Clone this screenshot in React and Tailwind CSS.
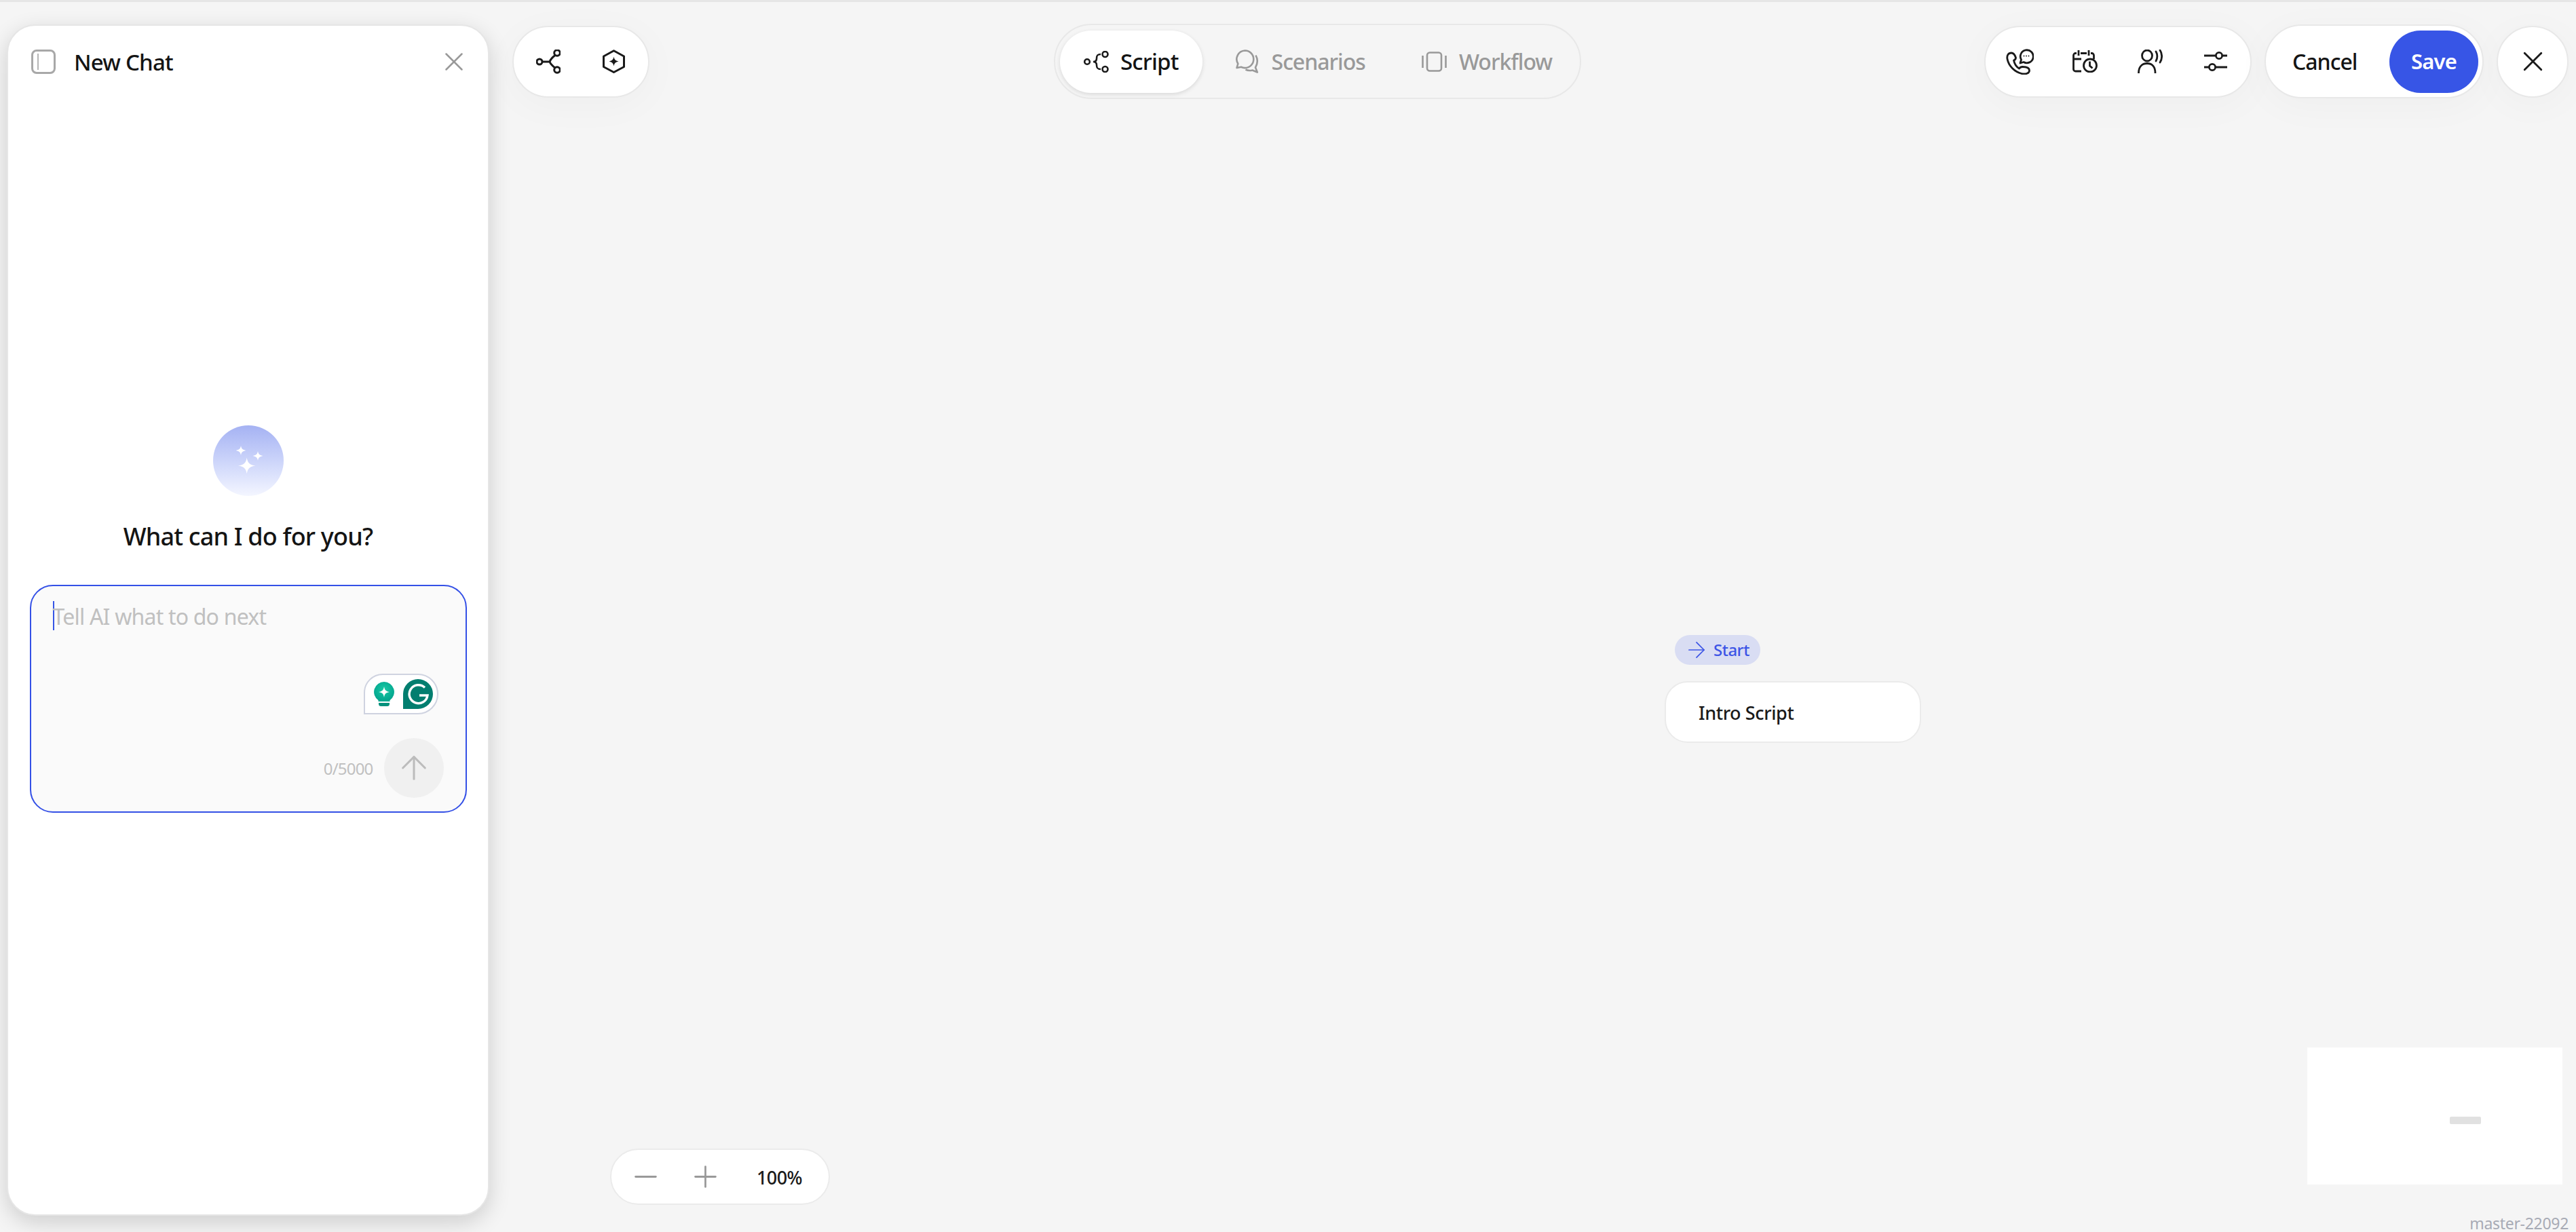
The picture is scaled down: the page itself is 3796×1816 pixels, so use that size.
import { Minus, Plus, X, ArrowUp, ArrowRight } from "lucide-react";

function ShareIcon() {
  return (
    <svg width="36" height="36" viewBox="0 0 36 36" fill="none" stroke="#1a1a1a" strokeWidth="3">
      <circle cx="5" cy="18" r="4" />
      <circle cx="31" cy="5" r="4.3" />
      <circle cx="31" cy="30" r="4.3" />
      <path d="M9 18h11M28 8.5c-4 3-6.5 5-8 9.5 1.5 4 4 6 8 9" />
    </svg>
  );
}

function HexIcon() {
  return (
    <svg width="33" height="35" viewBox="0 0 33 35" fill="none" stroke="#1a1a1a" strokeWidth="3">
      <path d="M16.5 1.7 31.5 10v15.5l-15 8-15-8V10z" strokeLinejoin="round" />
      <path d="M16.5 10.500c.8 4.300 2.400 6 7 7-4.600 1-6.200 2.700-7 7-.8-4.300-2.400-6-7-7 4.600-1 6.200-2.700 7-7z" fill="#1a1a1a" stroke="none" />
    </svg>
  );
}

function ScriptIcon() {
  return (
    <svg width="37" height="32" viewBox="0 0 37 32" fill="none" stroke="#1a1a1a" strokeWidth="2.6">
      <circle cx="5" cy="16" r="3.8" />
      <circle cx="31.500" cy="5" r="4" />
      <circle cx="31.500" cy="27" r="4" />
      <path d="M25 5c-5 0-6 2-6 6 0 3-1 5-5 5 4 0 5 2 5 5 0 4 1 6 6 6" />
    </svg>
  );
}

function ChatsIcon() {
  return (
    <svg width="36" height="35" viewBox="0 0 36 35" fill="none" stroke="#999" strokeWidth="2.6" strokeLinejoin="round">
      <path d="M14.500 1.500a12.800 12.800 0 0 1 0 25.600c-2 0-3.800-.5-5.500-1.300L2.500 27l1.800-6A12.800 12.800 0 0 1 14.500 1.500z" />
      <path d="M30.500 8.500c3 5.500 3 12-.5 18l2.800 7-7.300-3c-3.500 1-7 .6-10-1" />
    </svg>
  );
}

function WorkflowIcon() {
  return (
    <svg width="37" height="30" viewBox="0 0 37 30" fill="none" stroke="#999" strokeWidth="2.6">
      <rect x="8" y="1.500" width="21" height="27" rx="4" />
      <path d="M1.500 6v18M35.500 6v18" />
    </svg>
  );
}

function PhoneChatIcon() {
  return (
    <svg width="41" height="38" viewBox="0 0 41 38" fill="none" stroke="#1a1a1a" strokeWidth="2.800" strokeLinejoin="round" strokeLinecap="round">
      <path d="M8 6C3.500 6 1 9.500 2 15c2 10.500 11 19 21 21.500 6 1.500 11.500-.5 11.500-4.500 0-4-5-5.500-10-5.500-2 0-4 1-5 2.500-3.500-2-7-7-8-12 2-.8 3-2 3-4C13.500 10 11 6 8 6z" />
      <path d="M21 21l1.500-5a9.500 9.500 0 1 1 3.500 3.500z" />
      <circle cx="26.500" cy="10.500" r="0.900" fill="#1a1a1a" stroke="none" />
      <circle cx="30" cy="10.500" r="0.900" fill="#1a1a1a" stroke="none" />
      <circle cx="33.500" cy="10.500" r="0.900" fill="#1a1a1a" stroke="none" />
    </svg>
  );
}

function CalendarClockIcon() {
  return (
    <svg width="37" height="33" viewBox="0 0 37 33" fill="none" stroke="#1a1a1a" strokeWidth="2.800">
      <path d="M13 31H4.500A3 3 0 0 1 1.500 28V7.500a3 3 0 0 1 3-3H6M12 4.500h9M27 4.500h1.500a3 3 0 0 1 3 3V13" />
      <path d="M9 0v8M24 0v8M1.500 13H13" />
      <circle cx="26" cy="22.500" r="9.500" />
      <path d="M25.500 16.500v6.500l4 3.500" />
    </svg>
  );
}

function VoiceUserIcon() {
  return (
    <svg width="37" height="35" viewBox="0 0 37 35" fill="none" stroke="#1a1a1a" strokeWidth="2.800" strokeLinecap="round">
      <ellipse cx="14" cy="9" rx="7.500" ry="8" />
      <path d="M1.500 34.500C1.500 26 6 20.500 14 20.500S26 26 26 34.500" />
      <path d="M27 3c2.500 4 2.500 10 0 14M33 1c3.500 5 3.500 13 0 18" />
    </svg>
  );
}

function SlidersIcon() {
  return (
    <svg width="34" height="29" viewBox="0 0 34 29" fill="none" stroke="#1a1a1a" strokeWidth="2.800">
      <path d="M0 6h17M27 6h7M0 23h7M17 23h17" />
      <circle cx="22" cy="6" r="4.600" />
      <circle cx="12" cy="23" r="4.600" />
    </svg>
  );
}

function Sparkles() {
  return (
    <svg width="44" height="44" viewBox="0 0 44 44" fill="#fff">
      <path d="M15 10c1.500 8 4 10.500 13 12-9 1.500-11.500 4-13 12-1.500-8-4-10.500-13-12 9-1.500 11.500-4 13-12z" transform="translate(5 8) scale(0.98)" />
      <path d="M11 0c.8 4.500 2.300 6 7.500 7-5.200 1-6.700 2.500-7.500 7-.8-4.500-2.300-6-7.500-7 5.200-1 6.700-2.500 7.500-7z" />
      <path d="M36 8c.8 4.500 2.300 6 7.500 7-5.200 1-6.700 2.500-7.500 7-.8-4.500-2.300-6-7.500-7 5.200-1 6.700-2.500 7.500-7z" />
    </svg>
  );
}

function GrammarlyBadge() {
  return (
    <div className="absolute left-[490px] top-[129px] flex h-[60px] w-[110px] items-center gap-[13px] rounded-tl-[28px] rounded-r-[30px] border-2 border-[#cfd3e0] bg-white pl-[13px]">
      <svg width="30" height="36" viewBox="0 0 30 36">
        <defs>
          <radialGradient id="bulb" cx="50%" cy="40%" r="55%">
            <stop offset="0%" stopColor="#19c9a5" />
            <stop offset="100%" stopColor="#03a78f" />
          </radialGradient>
        </defs>
        <path d="M15 0a15 15 0 0 1 8.500 27.300V29H6.500v-1.700A15 15 0 0 1 15 0z" fill="url(#bulb)" />
        <path d="M7 31h16v1.500a3.500 3.500 0 0 1-3.500 3.500h-9A3.500 3.500 0 0 1 7 32.500z" fill="#03917c" />
        <path d="M15 7c1 5.500 2.500 7 8 8-5.500 1-7 2.500-8 8-1-5.500-2.500-7-8-8 5.500-1 7-2.500 8-8z" fill="#fff" />
      </svg>
      <svg width="44" height="44" viewBox="0 0 44 44" fill="none">
        <path d="M22 0a22 22 0 0 1 0 44H0V22A22 22 0 0 1 22 0z" fill="#027e6f" />
        <path d="M32 12.500A13.500 13.500 0 1 0 36 24H24" stroke="#fff" strokeWidth="3.400" />
      </svg>
    </div>
  );
}

function ChatPanel() {
  return (
    <aside className="mt-[1px] flex h-[1756px] w-[711px] shrink-0 flex-col rounded-[42px] border-2 border-[#e6e6e6] bg-white shadow-[0_10px_32px_rgba(0,0,0,0.16)]">
      <header className="flex h-[106px] items-center justify-between pl-[34px] pr-[27px]">
        <div className="flex items-center gap-[27px]">
          <div className="flex h-[36px] w-[36px] rounded-[8px] border-[3px] border-[#a8a8a8] pl-[6px]">
            <div className="h-[24px] w-[2px] self-center bg-[#b5b5b5]"></div>
          </div>
          <span className="text-[33px] font-medium leading-none tracking-[-0.8px] text-[#141414]">New Chat</span>
        </div>
        <X size={46} strokeWidth={1.3} className="text-[#999]" />
      </header>

      <div className="flex flex-col items-center pt-[483px]">
        <div className="flex h-[104px] w-[104px] items-center justify-center rounded-full bg-gradient-to-b from-[#a5b2f3] to-[#f4f6ff]">
          <Sparkles />
        </div>
        <h2 className="mt-[34px] h-[52px] text-[36px] font-medium leading-[52px] tracking-[-0.8px] text-[#141414]">What can I do for you?</h2>

        <div className="relative mt-[45px] flex h-[336px] w-[644px] flex-col justify-between rounded-[34px] border-2 border-[#3450e6] bg-[#fafafa] pb-[20px] pl-[32px] pr-[32px] pt-[21px]">
          <div className="flex items-center">
            <div className="h-[43px] w-[2px] bg-[#3755e6]"></div>
            <span className="-ml-[2px] pt-[2px] text-[32px] leading-[43px] tracking-[-0.8px] text-[#c0c0c0]">Tell AI what to do next</span>
          </div>
          <GrammarlyBadge />
          <div className="flex items-center justify-end gap-[16px]">
            <span className="pt-[2px] text-[24px] tracking-[-0.8px] text-[#c0c0c0]">0/5000</span>
            <button className="flex h-[88px] w-[88px] items-center justify-center rounded-full bg-[#f0f0f0] text-[#bcbcbc]">
              <ArrowUp size={56} strokeWidth={1.3} />
            </button>
          </div>
        </div>
      </div>
    </aside>
  );
}

function Tab({ icon, label, active }) {
  return (
    <div
      className={
        active
          ? "flex h-[92px] items-center gap-[17px] rounded-full bg-white px-[35px] text-[33px] tracking-[-0.8px] text-[#141414] shadow-[0_2px_6px_rgba(0,0,0,0.12)]"
          : "flex h-[92px] items-center gap-[18px] rounded-full px-[35px] text-[32px] tracking-[-1px] text-[#999]"
      }
    >
      {icon}
      <span className="font-medium">{label}</span>
    </div>
  );
}

function Toolbar() {
  return (
    <div className="flex h-[111px] items-center pl-[34px] pr-[11px]">
      <div className="flex h-[106px] w-[202px] items-center gap-[62px] rounded-full border-2 border-[#e8e8e8] bg-white pl-[33px] shadow-[0_10px_60px_rgba(0,0,0,0.03)]">
        <ShareIcon />
        <HexIcon />
      </div>

      <div className="ml-[596px] flex h-[111px] w-[777px] items-center gap-[13px] rounded-full border-2 border-[#e8e8e8] pl-[7px]">
        <Tab active icon={<ScriptIcon />} label="Script" />
        <Tab icon={<ChatsIcon />} label="Scenarios" />
        <Tab icon={<WorkflowIcon />} label="Workflow" />
      </div>

      <div className="ml-auto flex items-center gap-[19px]">
        <div className="flex h-[106px] w-[394px] items-center rounded-full border-2 border-[#e8e8e8] bg-white pl-[30px] shadow-[0_10px_60px_rgba(0,0,0,0.03)]">
          <div className="flex w-[98px]"><PhoneChatIcon /></div>
          <div className="flex w-[96px]"><CalendarClockIcon /></div>
          <div className="flex w-[98px]"><VoiceUserIcon /></div>
          <SlidersIcon />
        </div>

        <div className="flex h-[109px] w-[323px] items-center justify-between rounded-full border-2 border-[#e8e8e8] bg-white pl-[39px] pr-[6px] shadow-[0_10px_60px_rgba(0,0,0,0.03)]">
          <span className="text-[32px] font-medium tracking-[-1px] text-[#141414]">Cancel</span>
          <button className="flex h-[92px] w-[131px] items-center justify-center rounded-full bg-[#3755e6] text-[31px] font-semibold tracking-[-0.8px] text-white">Save</button>
        </div>

        <button className="flex h-[106px] w-[106px] items-center justify-center rounded-full border-2 border-[#e8e8e8] bg-white shadow-[0_10px_60px_rgba(0,0,0,0.03)]">
          <X size={49} strokeWidth={1.4} className="text-[#1a1a1a]" />
        </button>
      </div>
    </div>
  );
}

function Canvas() {
  return (
    <div className="relative flex-1">
      {/* node sits on the flow canvas */}
      <div className="absolute left-[1732px] top-[790px] flex w-[378px] flex-col items-start">
        <div className="ml-[15px] flex h-[44px] w-[126px] items-center gap-[6px] rounded-full bg-[#d9ddf3] pl-[13px] text-[#3d55e6]">
          <ArrowRight size={38} strokeWidth={1.1} />
          <span className="text-[24px] font-medium tracking-[-0.5px]">Start</span>
        </div>
        <div className="mt-[24px] flex h-[91px] w-[378px] items-center rounded-[34px] border-2 border-[#ebebeb] bg-white pl-[48px]">
          <span className="pt-[3px] text-[27px] font-medium tracking-[-0.4px] text-[#1a1a1a]">Intro Script</span>
        </div>
      </div>

      <div className="absolute left-[178px] top-[1547px] flex h-[83px] w-[324px] items-center rounded-full border-2 border-[#ebebeb] bg-white pl-[25px]">
        <Minus size={51} strokeWidth={1.3} className="text-[#999]" />
        <Plus size={51} strokeWidth={1.3} className="ml-[37px] text-[#999]" />
        <span className="ml-[50px] pt-[3px] text-[27px] font-medium tracking-[-0.6px] text-[#1a1a1a]">100%</span>
      </div>

      <div className="absolute left-[2679px] top-[1398px] flex h-[202px] w-[376px] bg-white pl-[210px] pt-[102px]">
        <div className="h-[11px] w-[46px] rounded-[2px] bg-[#e1e1e1]"></div>
      </div>

      <span className="absolute bottom-[1px] right-[11px] text-[23px] leading-none tracking-[-0.3px] text-[#a8abb5]">master-22092</span>
    </div>
  );
}

export default function App() {
  return (
    <div className="flex h-[1816px] w-full overflow-hidden border-t-[3px] border-[#e6e6e6] bg-[#f5f5f5] pl-[10px] pt-[32px] font-['Noto_Sans',sans-serif]">
      <ChatPanel />
      <main className="flex min-w-0 flex-1 flex-col">
        <Toolbar />
        <Canvas />
      </main>
    </div>
  );
}
